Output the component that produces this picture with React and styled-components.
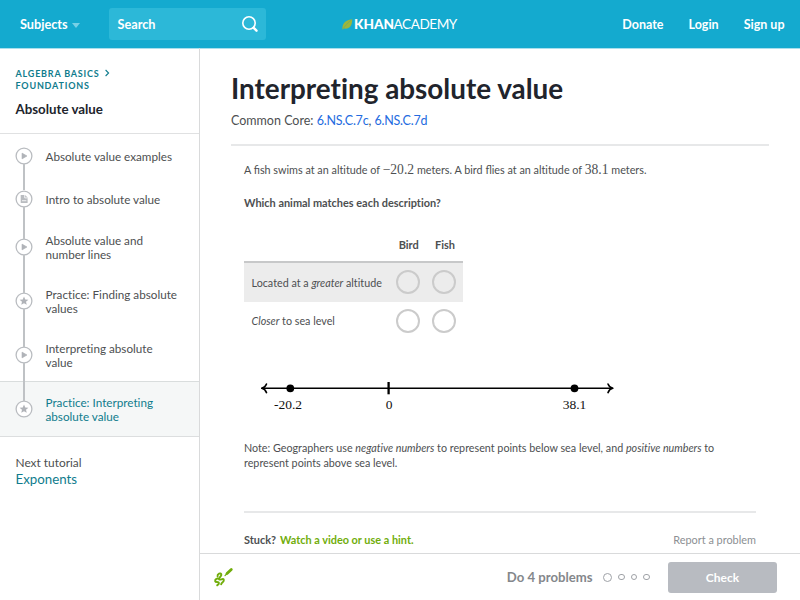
import React from "react";
import styled, { createGlobalStyle } from "styled-components";

const Global = createGlobalStyle`
  * { box-sizing: border-box; }
  body { margin: 0; background: #fff; overflow: hidden; }
  h1, h2, p { margin: 0; }
  button, input { font: inherit; }
`;

const Page = styled.div`
  width: 800px;
  height: 600px;
  display: flex;
  flex-direction: column;
  overflow: hidden;
  font-family: Lato, sans-serif;
  font-variant-ligatures: none;
  color: #4d4f51;
`;

const Header = styled.header`
  display: flex;
  align-items: center;
  flex: none;
  height: 48px;
  padding: 0 15.5px 0 20px;
  background: #14aacf;
  box-shadow: 0 1px 0 #a9dfed;
  color: #fff;
  font-size: 12.7px;
  font-weight: 700;
`;

const Subjects = styled.div`
  display: flex;
  align-items: center;
  width: 89px;
  gap: 4px;
`;

const Caret = styled.span`
  border: 4px solid transparent;
  border-top: 5px solid #77d0e6;
  border-bottom: 0;
  margin-top: 3px;
`;

const SearchBox = styled.div`
  display: flex;
  align-items: center;
  justify-content: space-between;
  width: 157px;
  height: 32px;
  padding: 0 7px 0 8.5px;
  border-radius: 3px;
  background: #2cb8d8;
`;

const Logo = styled.div`
  display: flex;
  align-items: center;
  margin-left: 75px;
  width: 119px;
  font-size: 13.6px;
  line-height: 16px;
`;

const LogoBold = styled.span`
  width: 39.5px;
  font-weight: 900;
`;

const LogoThin = styled.span`
  font-weight: 400;
  letter-spacing: -0.45px;
`;

const Nav = styled.nav`
  display: flex;
  gap: 25px;
  margin-left: auto;
  font-size: 12.5px;
`;

const Body = styled.div`
  display: flex;
  flex: 1;
  min-height: 0;
`;

const Sidebar = styled.aside`
  display: flex;
  flex-direction: column;
  width: 200px;
  flex: none;
  border-right: 1px solid #d9dadb;
`;

const TopicHead = styled.div`
  height: 86px;
  padding: 19.5px 15.5px 0;
  border-bottom: 1.5px solid #e0e1e2;
`;

const Crumb = styled.div`
  color: #0f7c8d;
  font-size: 9px;
  line-height: 12.3px;
  font-weight: 700;
  letter-spacing: 0.8px;
  text-transform: uppercase;
`;

const TopicTitle = styled.h2`
  margin-top: 8.5px;
  color: #21242c;
  font-size: 13.3px;
  line-height: 17px;
  font-weight: 700;
`;

const Lesson = styled.div`
  display: flex;
  align-items: center;
  position: relative;
  height: ${(p) => (p.$tall ? 54 : 43)}px;
  padding-left: 15px;
  gap: 12.5px;
  font-size: 11.7px;
  line-height: 14px;
  color: ${(p) => (p.$active ? "#0f7c8d" : "#4d4f51")};
  background: ${(p) => (p.$active ? "#f5f7f7" : "transparent")};
  box-shadow: ${(p) => (p.$active ? "0 -1px 0 #d9dddd" : "none")};

  &::before {
    content: "";
    display: ${(p) => (p.$link ? "block" : "none")};
    position: absolute;
    left: 23px;
    top: ${(p) => -p.$reach}px;
    width: 2px;
    height: ${(p) => p.$link}px;
    background: #bfc2c5;
  }
`;

const LessonIcon = styled.svg`
  flex: none;
  display: block;
  width: 18px;
  height: 18px;
`;

const Next = styled.div`
  height: 64px;
  padding: 16.5px 15.5px 0;
  margin-top: -1px;
  border-top: 2px solid #dcdedf;
  font-size: 11.9px;
  line-height: 17px;
`;

const NextLink = styled.div`
  color: #0f7c8d;
  font-size: 13.3px;
`;

const Main = styled.main`
  display: flex;
  flex-direction: column;
  flex: 1;
  min-width: 0;
`;

const Content = styled.div`
  flex: 1;
  padding: 22px 31px 0;
`;

const Title = styled.h1`
  height: 37px;
  color: #21242c;
  font-size: 27.85px;
  line-height: 37px;
  font-weight: 700;
  white-space: nowrap;
`;

const Standards = styled.div`
  height: 39px;
  padding-top: 5px;
  border-bottom: 2px solid #e7e8e9;
  font-size: 12.5px;
  line-height: 17px;
  a { color: #246be0; letter-spacing: -0.22px; }
`;

const Exercise = styled.section`
  padding: 0 13px;
  font-size: 10.8px;
  line-height: 15px;
`;

const Prompt = styled.p`
  height: 15px;
  margin-top: 16px;
  white-space: nowrap;
`;

const Joined = styled.span`
  font-variant-ligatures: common-ligatures;
`;

const Num = styled.span`
  font-family: "Liberation Serif", serif;
  font-size: 13.6px;
  line-height: 1;
`;

const Question = styled.p`
  margin-top: 18px;
  font-size: 10.93px;
  font-weight: 700;
`;

const Grid = styled.div`
  width: 219px;
  margin-top: 18px;
`;

const Row = styled.div`
  display: grid;
  grid-template-columns: 145.5px 36.5px 36px;
  align-items: center;
  height: 38.5px;
  background: ${(p) => (p.$shaded ? "#ececec" : "transparent")};
`;

const HeadRow = styled(Row)`
  grid-template-columns: 146.5px 36.5px 36px;
  height: 35px;
  border-bottom: 2px solid #c7c8c9;
  font-size: 11px;
  font-weight: 700;
`;

const HeadCell = styled.span`
  text-align: center;
`;

const RowLabel = styled.span`
  padding-left: 7.5px;
  font-size: 10.75px;
  white-space: nowrap;
`;

const Radio = styled.span`
  justify-self: center;
  width: 24px;
  height: 24px;
  border: 2px solid #cbcbcb;
  border-radius: 50%;
`;

const NumberLine = styled.svg`
  display: block;
  width: 380px;
  height: 50px;
  margin-top: 26px;
`;

const Note = styled.p`
  height: 73px;
  margin-top: 24px;
  border-bottom: 2px solid #e7e8e9;
  font-size: 10.75px;
  white-space: nowrap;
`;

const HelpRow = styled.div`
  display: flex;
  justify-content: space-between;
  margin-top: 18.5px;
  font-size: 10.9px;
  font-weight: 700;
`;

const Hint = styled.span`
  margin-left: 4px;
  color: #71ad0b;
`;

const Report = styled.span`
  color: #8c8f93;
  font-weight: 400;
`;

const Footer = styled.footer`
  display: flex;
  align-items: center;
  flex: none;
  height: 47px;
  padding: 0 23px 0 13px;
  border-top: 1px solid #d9dadb;
`;

const Goal = styled.span`
  margin-left: auto;
  color: #84878b;
  font-size: 13.15px;
  font-weight: 700;
`;

const Dots = styled.div`
  display: flex;
  align-items: center;
  gap: 6px;
  margin: 0 18.5px 0 10.5px;
`;

const Dot = styled.span`
  width: ${(p) => (p.$current ? 9 : 6.5)}px;
  height: ${(p) => (p.$current ? 9 : 6.5)}px;
  border: ${(p) => (p.$current ? 1 : 1.5)}px solid #9fa2a7;
  border-radius: 50%;
`;

const CheckButton = styled.button`
  width: 109px;
  height: 31px;
  padding: 1px 0 0;
  border: 0;
  border-radius: 3px;
  background: #b8bbc1;
  color: #fff;
  font-size: 12px;
  font-weight: 700;
`;

const lessons = [
  { lines: ["Absolute value examples"], kind: "video" },
  { lines: ["Intro to absolute value"], kind: "article", reach: 13, link: 26 },
  { lines: ["Absolute value and", "number lines"], kind: "video", reach: 13, link: 32 },
  { lines: ["Practice: Finding absolute", "values"], kind: "practice", reach: 19, link: 38 },
  { lines: ["Interpreting absolute", "value"], kind: "video", reach: 19, link: 38 },
  { lines: ["Practice: Interpreting", "absolute value"], kind: "practice", reach: 19, link: 38, active: true },
];

function KindIcon({ kind }) {
  return (
    <LessonIcon viewBox="0 0 18 18">
      <circle cx="9" cy="9" r="7.9" fill="#fff" stroke="#b9bcc0" strokeWidth="1.3" />
      {kind === "video" && <path d="M7 6.1v5.8L12 9z" fill="#b0b3b8" stroke="#b0b3b8" strokeWidth=".6" strokeLinejoin="round" />}
      {kind === "article" && (
        <>
          <path d="M5.7 5h4.3l2.6 2.6V13H5.7z" fill="#b9bcc0" />
          <path d="M9.7 5v2.9h2.9M7 10.7h4.3" fill="none" stroke="#fff" strokeWidth=".8" />
        </>
      )}
      {kind === "practice" && (
        <path d="M9 4.5l1.25 2.9 3.15.3-2.4 2.05.75 3.1L9 11.2l-2.75 1.65.75-3.1L4.6 7.7l3.15-.3z" fill="#b0b3b8" />
      )}
    </LessonIcon>
  );
}

export default function App() {
  return (
    <Page>
      <Global />
      <Header>
        <Subjects>Subjects <Caret /></Subjects>
        <SearchBox>
          Search
          <svg width="18" height="18" viewBox="0 0 18 18" fill="none" stroke="#fff">
            <circle cx="8" cy="8" r="6.2" strokeWidth="1.6" />
            <path d="M12.7 12.9l2.8 2.8" strokeWidth="2.4" strokeLinecap="round" />
          </svg>
        </SearchBox>
        <Logo>
          <svg width="13" height="16" viewBox="0 0 13 16">
            <path d="M1.5 13.5C1 8 3.5 4.3 11.2 3.2 11.2 10 8.5 13.2 3.3 12.6z" fill="#9db63b" />
            <path d="M1.5 13.5C4 10 6 7.5 11.2 3.2" stroke="#6ba76a" strokeWidth=".6" fill="none" />
          </svg>
          <LogoBold>KHAN</LogoBold>
          <LogoThin>ACADEMY</LogoThin>
        </Logo>
        <Nav>
          <span>Donate</span>
          <span>Login</span>
          <span>Sign up</span>
        </Nav>
      </Header>
      <Body>
        <Sidebar>
          <TopicHead>
            <Crumb>
              Algebra basics{" "}
              <svg width="7" height="8" viewBox="0 0 7 8" fill="none" stroke="#0f7c8d" strokeWidth="1.1">
                <path d="M2.6 1l3 3-3 3" />
              </svg>
              <br />
              Foundations
            </Crumb>
            <TopicTitle>Absolute value</TopicTitle>
          </TopicHead>
          {lessons.map((l) => (
            <Lesson key={l.lines.join(" ")} $tall={l.lines.length > 1} $active={l.active} $reach={l.reach} $link={l.link}>
              <KindIcon kind={l.kind} />
              <span>
                {l.lines.map((t) => (
                  <div key={t}>{t}</div>
                ))}
              </span>
            </Lesson>
          ))}
          <Next>
            Next tutorial
            <NextLink>Exponents</NextLink>
          </Next>
        </Sidebar>
        <Main>
          <Content>
            <Title>Interpreting absolute value</Title>
            <Standards>
              Common Core: <a>6.NS.C.7c</a>, <a>6.NS.C.7d</a>
            </Standards>
            <Exercise>
              <Prompt>
                A <Joined>fish</Joined> swims at an altitude of <Num>−20.2</Num> meters. A bird <Joined>flies</Joined> at an altitude of <Num>38.1</Num> meters.
              </Prompt>
              <Question>Which animal matches each description?</Question>
              <Grid>
                <HeadRow>
                  <span />
                  <HeadCell>Bird</HeadCell>
                  <HeadCell>Fish</HeadCell>
                </HeadRow>
                <Row $shaded>
                  <RowLabel>Located at a <em>greater</em> altitude</RowLabel>
                  <Radio />
                  <Radio />
                </Row>
                <Row>
                  <RowLabel><em>Closer</em> to sea level</RowLabel>
                  <Radio />
                  <Radio />
                </Row>
              </Grid>
              <NumberLine viewBox="0 0 380 50">
                <g fill="none" stroke="#000" strokeWidth="1.6" strokeLinecap="round" strokeLinejoin="round">
                  <path d="M18 22.3H368.5" />
                  <path d="M22.5 18C21.5 20.5 20 21.8 17.8 22.3 20 22.8 21.5 24.1 22.5 26.6" />
                  <path d="M364 18C365 20.5 366.5 21.8 368.7 22.3 366.5 22.8 365 24.1 364 26.6" />
                  <path d="M144.6 16V28.3" strokeWidth="2.3" strokeLinecap="butt" />
                </g>
                <circle cx="46.3" cy="22.3" r="3.9" />
                <circle cx="330.5" cy="22.3" r="3.9" />
                <g fontFamily="Liberation Serif, serif" fontSize="13.5" textAnchor="middle" fill="#111">
                  <text x="44" y="43">-20.2</text>
                  <text x="145" y="43">0</text>
                  <text x="330.5" y="43">38.1</text>
                </g>
              </NumberLine>
              <Note>
                Note: Geographers use <em>negative numbers</em> to represent points below sea level, and <em>positive numbers</em> to
                <br />
                represent points above sea level.
              </Note>
              <HelpRow>
                <span>Stuck?<Hint>Watch a video or use a hint.</Hint></span>
                <Report>Report a problem</Report>
              </HelpRow>
            </Exercise>
          </Content>
          <Footer>
            <svg width="21" height="22" viewBox="0 0 21 22" fill="none" stroke="#71ad0b" strokeLinecap="round" strokeLinejoin="round">
              <path d="M14 7.6L18.3 3.4" strokeWidth="2.8" />
              <path d="M12 9.6l1.6-1.6" strokeWidth="1.2" />
              <path d="M4.6 10.2C4.2 7.6 7.6 6.6 8.3 8.4C9 10.4 5 11.6 6.2 13.3C7.200 14.600 10.400 11.600 10.800 14C11.100 16.200 8.300 16.600 8.200 18.200M6 13C4.500 12 1.900 13.200 2.200 15.200C2.600 17 5.600 15.200 5.900 17C6.100 18.200 4.800 18.900 4.200 19.300" strokeWidth="2" />
            </svg>
            <Goal>Do 4 problems</Goal>
            <Dots>
              <Dot $current />
              <Dot />
              <Dot />
              <Dot />
            </Dots>
            <CheckButton>Check</CheckButton>
          </Footer>
        </Main>
      </Body>
    </Page>
  );
}
